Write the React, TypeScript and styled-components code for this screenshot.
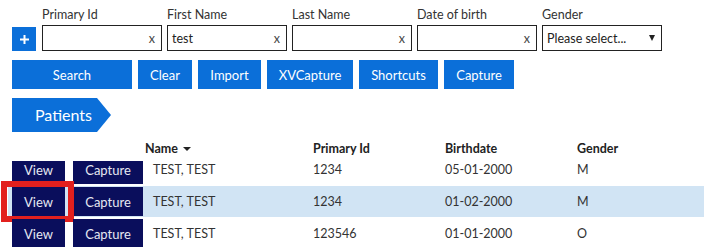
import React from "react";
import styled, { createGlobalStyle } from "styled-components";

const Global = createGlobalStyle`
  html, body { margin: 0; padding: 0; background: #fff; }
  body { font-family: Lato, "Open Sans", Arial, sans-serif; color: #333; overflow: hidden; }
  * { box-sizing: border-box; }
`;

const BLUE = "#0b6fd9";
const NAVY = "#0a0e5c";
const FONT = `Lato, "Open Sans", Arial, sans-serif`;

const Page = styled.div`
  width: 704px;
  height: 247px;
  padding: 7px 0 0 12px;
  overflow: hidden;
`;

const FilterRow = styled.div`
  display: flex;
  align-items: flex-end;
  gap: 5px;
`;

const PlusButton = styled.button`
  width: 24px;
  height: 24px;
  margin-right: 1px;
  border: none;
  background: ${BLUE};
  padding: 0;
  display: flex;
  align-items: center;
  justify-content: center;
`;

const Field = styled.div`
  display: flex;
  flex-direction: column;
  width: 120px;
`;

const Label = styled.label`
  font-size: 12.5px;
  line-height: 15px;
  color: #333;
  margin-bottom: 3px;
`;

const InputBox = styled.div`
  height: 26px;
  border: 1.5px solid #222;
  display: flex;
  align-items: center;
  padding: 0 6px 0 4px;
  font-size: 12.5px;
  color: #222;
`;

const InputText = styled.span`
  flex: 1;
`;

const Clear = styled.span`
  font-size: 12.5px;
  color: #444;
`;

const ButtonRow = styled.div`
  display: flex;
  gap: 6px;
  margin-top: 9px;
`;

const ActionButton = styled.button<{ $w: number }>`
  width: ${(p) => p.$w}px;
  height: 29px;
  border: none;
  background: ${BLUE};
  color: #fff;
  font-family: ${FONT};
  font-size: 13px;
  padding: 0;
`;

const Tab = styled.div`
  margin-top: 9px;
  width: 99px;
  height: 34px;
  background: ${BLUE};
  color: #fff;
  font-size: 16px;
  line-height: 34px;
  padding-left: 23px;
  clip-path: polygon(0 0, 85px 0, 99px 50%, 85px 100%, 0 100%);
`;

const Table = styled.div`
  margin: 4px 0 0 -4px;
  width: 696px;
`;

const COLS = "61px 76px 168px 132px 132px 1fr";

const HeaderRow = styled.div`
  position: relative;
  z-index: 1;
  background: #fff;
  display: grid;
  grid-template-columns: ${COLS};
  height: 25px;
  align-items: center;
  margin-bottom: -7px;
`;

const HeadCell = styled.div`
  font-weight: bold;
  font-size: 12.5px;
  color: #222;
  display: flex;
  align-items: center;
  gap: 5px;
`;

const Row = styled.div<{ $selected?: boolean }>`
  position: relative;
  display: grid;
  grid-template-columns: ${COLS};
  height: 31px;
  margin-bottom: 1px;
  align-items: stretch;
  background: ${(p) => (p.$selected ? "#d1e4f4" : "transparent")};
`;

const ButtonCell = styled.div`
  padding: 1px 0 1px 4px;
  display: flex;
`;

const RowButton = styled.button<{ $w: number }>`
  width: ${(p) => p.$w}px;
  height: 100%;
  border: none;
  padding: 0;
  background: ${NAVY};
  color: #e6e8f2;
  font-family: ${FONT};
  font-size: 13px;
`;

const Cell = styled.div<{ $pl?: number }>`
  display: flex;
  align-items: center;
  padding-left: ${(p) => p.$pl ?? 0}px;
  font-size: 12.5px;
  color: #333;
`;

const Highlight = styled.div`
  position: absolute;
  left: -7px;
  top: -5px;
  width: 73px;
  height: 41px;
  border: 6px solid #e2201e;
  pointer-events: none;
`;

const Plus = () => (
  <svg width="9" height="9" viewBox="0 0 9 9">
    <path d="M4.5 0v9M0 4.5h9" stroke="#fff" strokeWidth="2" />
  </svg>
);

const Down = ({ w, h }: { w: number; h: number }) => (
  <svg width={w} height={h} viewBox={`0 0 ${w} ${h}`}>
    <polygon points={`0,0 ${w},0 ${w / 2},${h}`} fill="#222" />
  </svg>
);

const fields = [
  { label: "Primary Id", value: "" },
  { label: "First Name", value: "test" },
  { label: "Last Name", value: "" },
  { label: "Date of birth", value: "" },
];

const buttons: [string, number][] = [
  ["Search", 120],
  ["Clear", 54],
  ["Import", 63],
  ["XVCapture", 86],
  ["Shortcuts", 79],
  ["Capture", 70],
];

const patients = [
  { name: "TEST, TEST", id: "1234", dob: "05-01-2000", gender: "M" },
  { name: "TEST, TEST", id: "1234", dob: "01-02-2000", gender: "M", selected: true },
  { name: "TEST, TEST", id: "123546", dob: "01-01-2000", gender: "O" },
];

export default function App() {
  return (
    <Page>
      <Global />
      <FilterRow>
        <PlusButton>
          <Plus />
        </PlusButton>
        {fields.map((f) => (
          <Field key={f.label}>
            <Label>{f.label}</Label>
            <InputBox>
              <InputText>{f.value}</InputText>
              <Clear>x</Clear>
            </InputBox>
          </Field>
        ))}
        <Field>
          <Label>Gender</Label>
          <InputBox>
            <InputText>Please select...</InputText>
            <Down w={6} h={6} />
          </InputBox>
        </Field>
      </FilterRow>
      <ButtonRow>
        {buttons.map(([t, w]) => (
          <ActionButton key={t} $w={w}>
            {t}
          </ActionButton>
        ))}
      </ButtonRow>
      <Tab>Patients</Tab>
      <Table>
        <HeaderRow>
          <div />
          <div />
          <HeadCell>
            Name <Down w={8} h={4} />
          </HeadCell>
          <HeadCell>Primary Id</HeadCell>
          <HeadCell>Birthdate</HeadCell>
          <HeadCell>Gender</HeadCell>
        </HeaderRow>
        {patients.map((p, i) => (
          <Row key={i} $selected={p.selected}>
            <ButtonCell>
              <RowButton $w={53}>View</RowButton>
            </ButtonCell>
            <ButtonCell>
              <RowButton $w={70}>Capture</RowButton>
            </ButtonCell>
            <Cell $pl={8}>{p.name}</Cell>
            <Cell>{p.id}</Cell>
            <Cell>{p.dob}</Cell>
            <Cell>{p.gender}</Cell>
            {p.selected && <Highlight />}
          </Row>
        ))}
      </Table>
    </Page>
  );
}
